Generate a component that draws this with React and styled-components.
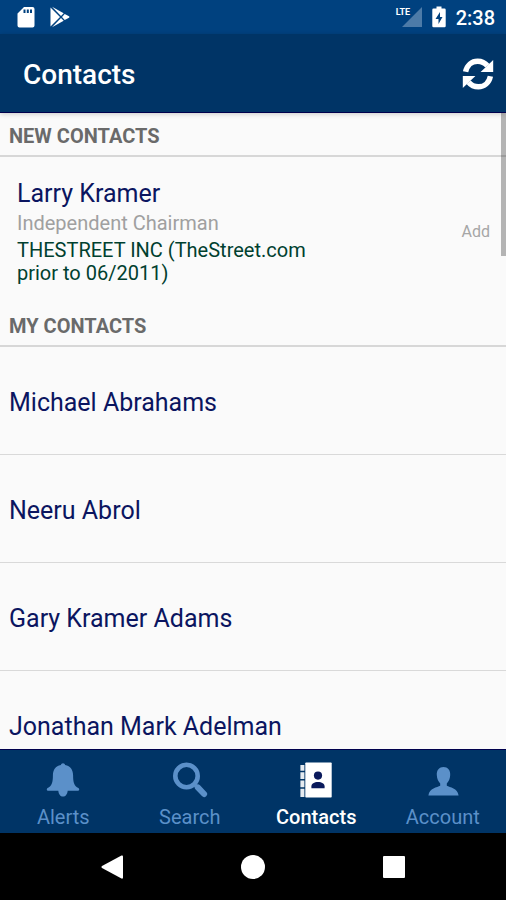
import styled, { createGlobalStyle, css } from "styled-components";

const GlobalStyle = createGlobalStyle`
  * {
    box-sizing: border-box;
  }

  body {
    margin: 0;
    background: #fafafa;
    font-family: Roboto, "Liberation Sans", sans-serif;
  }

  button {
    margin: 0;
    padding: 0;
    border: 0;
    background: none;
    font: inherit;
    color: inherit;
    cursor: pointer;
  }

  svg {
    display: block;
  }
`;

const Screen = styled.div`
  display: flex;
  flex-direction: column;
  height: 100vh;
`;

const StatusBar = styled.div`
  display: flex;
  justify-content: space-between;
  align-items: center;
  height: 34px;
  padding: 0 11px 0 17px;
  background: #00417f;
  color: #ffffff;
`;

const StatusGroup = styled.div`
  display: flex;
  align-items: center;
  gap: ${(p) => p.$gap}px;
`;

const Signal = styled.div`
  position: relative;
  padding-left: 6px;
`;

const Network = styled.span`
  position: absolute;
  top: 0;
  left: 0;
  font-size: 9px;
  line-height: 10px;
  font-weight: 700;
`;

const Clock = styled.span`
  padding-top: 2px;
  font-size: 20px;
  line-height: 24px;
  font-weight: 500;
`;

const Header = styled.header`
  position: relative;
  z-index: 1;
  display: flex;
  justify-content: space-between;
  align-items: center;
  height: 79px;
  padding: 2px 12px 0 23px;
  background: #003466;
  border-bottom: 1px solid #00004d;
  box-shadow: 0 1px 5px rgba(0, 0, 0, 0.2);
  color: #ffffff;
`;

const Title = styled.h1`
  margin: 0;
  padding-top: 2px;
  font-weight: 500;
  font-size: 28px;
  line-height: 32px;
`;

const Content = styled.main`
  position: relative;
  flex: 1;
  min-height: 0;
  overflow: hidden;
`;

const ScrollArea = styled.div`
  height: 100%;
  overflow-y: auto;
  scrollbar-width: none;
`;

const ScrollThumb = styled.div`
  position: absolute;
  top: 0;
  right: 0;
  width: 5px;
  height: 143px;
  background: rgba(0, 0, 0, 0.28);
`;

const SectionTitle = styled.h2`
  margin: 0;
  height: 44px;
  padding: 11px 9px 0;
  border-bottom: 2px solid #d7d7d7;
  font-weight: 700;
  font-size: 20px;
  line-height: 24px;
  color: #6a6a6a;
`;

const NewContact = styled.div`
  display: flex;
  justify-content: space-between;
  align-items: center;
  padding: 22px 16px 18px 17px;
`;

const Details = styled.div`
  width: 66%;
`;

const nameText = css`
  font-size: 25px;
  line-height: 30px;
  color: #0b1560;
`;

const NewName = styled.div`
  ${nameText}
  margin-bottom: 3px;
`;

const Role = styled.div`
  margin-bottom: 4px;
  font-size: 20px;
  line-height: 23px;
  color: #a0a0a0;
`;

const Company = styled.div`
  font-size: 20px;
  line-height: 23px;
  color: #00402f;
`;

const AddButton = styled.button`
  && {
    font-size: 16px;
    line-height: 20px;
    color: #a6a6a6;
  }
`;

const List = styled.ul`
  margin: 0;
  padding: 0;
  list-style: none;
`;

const Row = styled.li`
  border-bottom: 1px solid #d9d9d9;
`;

const RowLink = styled.a`
  ${nameText}
  display: block;
  padding: 41px 9px 36px;
  text-decoration: none;
`;

const TabBar = styled.nav`
  display: flex;
  height: 84px;
  background: #003466;
  border-top: 1px solid #00004d;
`;

const Tab = styled.button`
  && {
    flex: 1;
    display: flex;
    flex-direction: column;
    align-items: center;
    gap: 7px;
    padding-top: 12px;
    font-size: 20px;
    line-height: 24px;
    color: #5b90c9;
    ${(p) =>
      p.$active &&
      css`
        font-weight: 500;
        color: #ffffff;
      `}
  }
`;

const SystemBar = styled.div`
  display: flex;
  height: 67px;
  padding: 0 42px;
  background: #000000;
  color: #ffffff;
`;

const SystemButton = styled.button`
  && {
    flex: 1;
    display: flex;
    justify-content: center;
    align-items: center;
  }
`;

const SdCardIcon = () => (
  <svg width="18" height="22" viewBox="0 0 18 22" fill="currentColor" aria-hidden="true">
    <path
      fillRule="evenodd"
      d="M7 1h8.500a2 2 0 0 1 2 2v16.500a2 2 0 0 1-2 2H2.500a2 2 0 0 1-2-2V7.500zM6.500 3.500v3.500h2V3.500zM9.800 3.500v3.500h2V3.500zM13 3.500v3.500h2V3.500z"
    />
  </svg>
);

const PlayIcon = () => (
  <svg width="21" height="22" viewBox="0 0 21 22" fill="currentColor" aria-hidden="true">
    <path d="M.5 1.500 10 11 .5 20.500z" />
    <path d="M2 .8 13.700 7.300 11 10z" />
    <path d="M2 21.200 13.700 14.700 11 12z" />
    <path d="M14.700 7.900 19 10.200q1 .8 0 1.600L14.700 14.100 12 11z" />
  </svg>
);

const SignalIcon = () => (
  <svg width="20" height="20" viewBox="0 0 20 20" aria-hidden="true">
    <path d="M20 0V20H0z" fill="#4d7ba8" />
  </svg>
);

const BatteryIcon = () => (
  <svg width="14" height="22" viewBox="0 0 14 22" aria-hidden="true">
    <path
      d="M4.500 .5h5v2H12.500a1.200 1.200 0 0 1 1.200 1.200V20a1.200 1.200 0 0 1-1.200 1.200h-11A1.200 1.200 0 0 1 .3 20V3.700a1.200 1.200 0 0 1 1.200-1.200h3z"
      fill="#fff"
    />
    <path d="M8 6 3.500 13H6.500V18L10.500 11H8z" fill="#00417f" />
  </svg>
);

const RefreshIcon = () => (
  <svg width="32" height="32" viewBox="0 0 32 32" aria-hidden="true">
    <g fill="none" stroke="currentColor" strokeWidth="5.400">
      <path d="M3.600 13.800C5 7 9.800 3.200 15.600 3.200c4.400 0 7.400 1.600 9.800 4.600" />
      <path d="M28.400 18.200C27 25 22.200 28.800 16.400 28.800c-4.400 0-7.400-1.600-9.800-4.600" />
    </g>
    <path d="M31.200 2V14H18.600z" fill="currentColor" />
    <path d="M.8 30V18H13.400z" fill="currentColor" />
  </svg>
);

const BellIcon = () => (
  <svg width="36" height="36" viewBox="0 0 36 36" fill="currentColor" aria-hidden="true">
    <path d="M18 1.200c1.100 0 1.900.7 2.100 1.900 5.400 1.100 8 5 8 10.400 0 7 1 10.400 5.300 12.600 1.300.8 1 2.700-.4 2.700H22.700c-.4 3.500-2.100 5.800-4.700 5.800s-4.300-2.300-4.700-5.800H3c-1.400 0-1.700-1.900-.4-2.700C6.900 23.900 7.900 20.500 7.900 13.500c0-5.400 2.600-9.300 8-10.400.2-1.200 1-1.900 2.100-1.900z" />
  </svg>
);

const SearchIcon = () => (
  <svg width="36" height="36" viewBox="0 0 36 36" fill="none" stroke="currentColor" aria-hidden="true">
    <circle cx="14.500" cy="14" r="11.200" strokeWidth="4.600" />
    <path d="M22 22l4 4" strokeWidth="3.600" />
    <path d="M25.800 25.400l6.300 6.600" strokeWidth="6" strokeLinecap="round" />
  </svg>
);

const ContactsIcon = () => (
  <svg width="36" height="36" viewBox="0 0 36 36" fill="currentColor" aria-hidden="true">
    <rect x="7.300" y=".500" width="26.400" height="35" rx=".800" />
    <path d="M2.400 3h4v5.800h-4zM2.400 10.200h4v6.800h-4zM2.400 18.400h4v6.800h-4zM2.400 26.800h4v8.200h-4z" opacity=".9" />
    <g fill="#0a1a5c">
      <circle cx="20" cy="13.600" r="4.100" />
      <path d="M13.400 26.300v-1.800c0-3 2.800-4.500 6.600-4.500s6.600 1.500 6.600 4.500v1.800z" />
    </g>
  </svg>
);

const AccountIcon = () => (
  <svg width="36" height="36" viewBox="0 0 36 36" fill="currentColor" aria-hidden="true">
    <path d="M18.500 5c4.200 0 7 3 6.700 8-.2 3.800-1.500 6.600-3.400 8.400v2.400c3 1.600 10.800 2.500 11.800 9.600H3.400c1-7.100 8.800-8 11.800-9.600v-2.400c-1.900-1.800-3.200-4.600-3.400-8.400C11.500 8 14.300 5 18.500 5z" />
  </svg>
);

const BackIcon = () => (
  <svg width="24" height="24" viewBox="0 0 24 24" fill="currentColor" aria-hidden="true">
    <path d="M21.500 .5Q23 0 23 1.500V22.500Q23 24 21.500 23.500L2 12.900Q.6 12 2 11.100z" />
  </svg>
);

const HomeIcon = () => (
  <svg width="24" height="24" viewBox="0 0 24 24" fill="currentColor" aria-hidden="true">
    <circle cx="12" cy="12" r="12" />
  </svg>
);

const RecentIcon = () => (
  <svg width="24" height="24" viewBox="0 0 24 24" fill="currentColor" aria-hidden="true">
    <rect x="1" y="1" width="22" height="22" rx="1" />
  </svg>
);

const contacts = [
  "Michael Abrahams",
  "Neeru Abrol",
  "Gary Kramer Adams",
  "Jonathan Mark Adelman",
];

const tabs = [
  { name: "Alerts", Icon: BellIcon },
  { name: "Search", Icon: SearchIcon },
  { name: "Contacts", Icon: ContactsIcon },
  { name: "Account", Icon: AccountIcon },
];

export default function App() {
  return (
    <Screen>
      <GlobalStyle />
      <StatusBar>
        <StatusGroup $gap={15}>
          <SdCardIcon />
          <PlayIcon />
        </StatusGroup>
        <StatusGroup $gap={10}>
          <Signal>
            <Network>LTE</Network>
            <SignalIcon />
          </Signal>
          <BatteryIcon />
          <Clock>2:38</Clock>
        </StatusGroup>
      </StatusBar>

      <Header>
        <Title>Contacts</Title>
        <button type="button" aria-label="Refresh">
          <RefreshIcon />
        </button>
      </Header>

      <Content>
        <ScrollArea>
          <SectionTitle>NEW CONTACTS</SectionTitle>
          <NewContact>
            <Details>
              <NewName>Larry Kramer</NewName>
              <Role>Independent Chairman</Role>
              <Company>THESTREET INC (TheStreet.com prior to 06/2011)</Company>
            </Details>
            <AddButton type="button">Add</AddButton>
          </NewContact>

          <SectionTitle>MY CONTACTS</SectionTitle>
          <List>
            {contacts.map((name) => (
              <Row key={name}>
                <RowLink href="#">{name}</RowLink>
              </Row>
            ))}
          </List>
        </ScrollArea>
        <ScrollThumb />
      </Content>

      <TabBar>
        {tabs.map(({ name, Icon }) => (
          <Tab key={name} type="button" $active={name === "Contacts"}>
            <Icon />
            {name}
          </Tab>
        ))}
      </TabBar>

      <SystemBar>
        <SystemButton type="button" aria-label="Back">
          <BackIcon />
        </SystemButton>
        <SystemButton type="button" aria-label="Home">
          <HomeIcon />
        </SystemButton>
        <SystemButton type="button" aria-label="Recent apps">
          <RecentIcon />
        </SystemButton>
      </SystemBar>
    </Screen>
  );
}
